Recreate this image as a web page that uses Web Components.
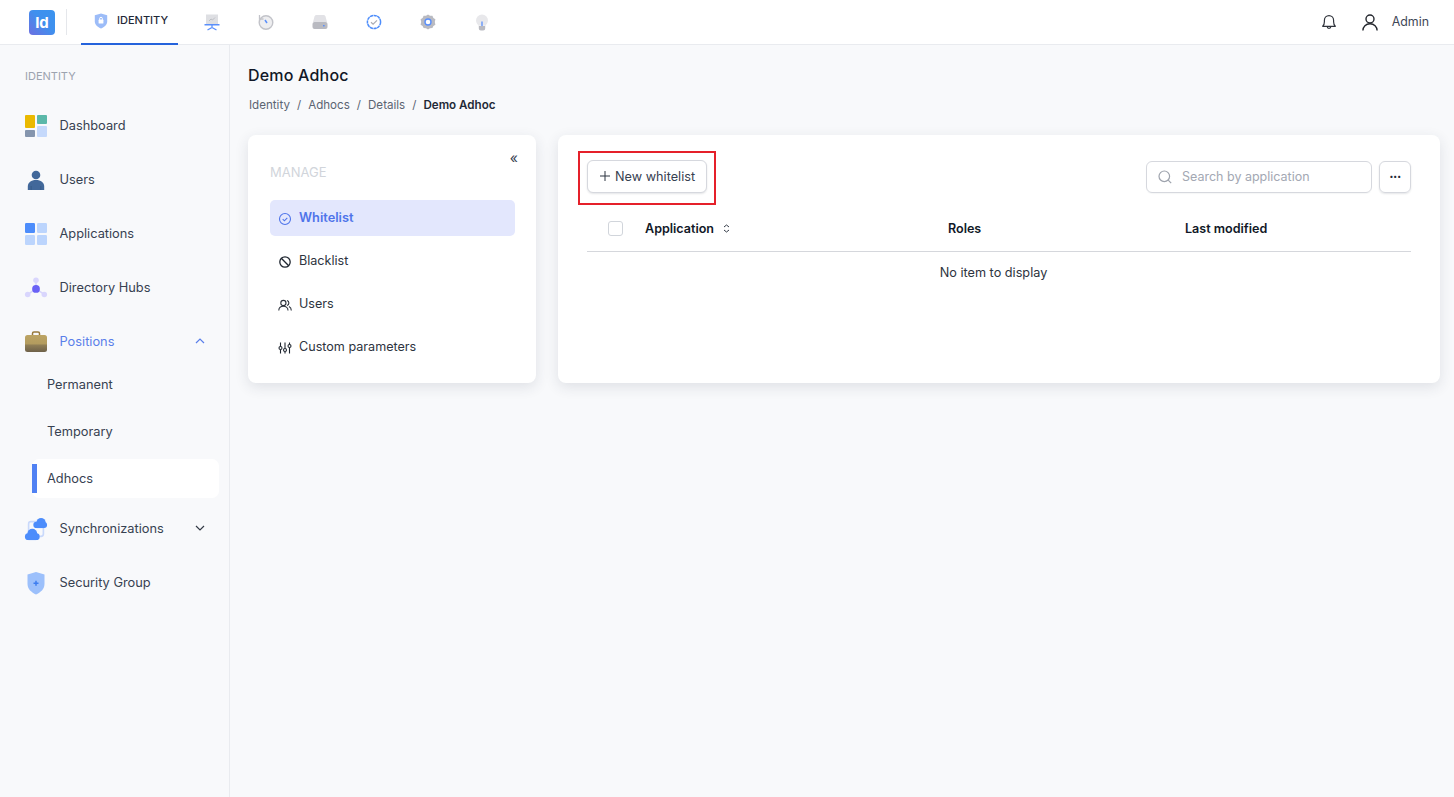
<!DOCTYPE html>
<html lang="en"><head><meta charset="utf-8"><title>Demo Adhoc</title>
<style>
html,body{margin:0;padding:0;height:100%;background:#f8f9fb;font-family:Inter,"Liberation Sans",sans-serif;color:#1f2937;overflow:hidden}
</style></head><body>
<x-app>
  <x-topbar slot="top"></x-topbar>
  <x-sidebar slot="side"></x-sidebar>
  <x-page slot="main"></x-page>
</x-app>
<script>
const I={
dash:`<svg width="24" height="24" viewBox="0 0 24 24"><rect x="1" y="1" width="10" height="13" rx="1" fill="#eab900"/><rect x="13" y="1" width="10" height="9" rx="1" fill="#5bb8a9"/><rect x="1" y="16" width="10" height="7" rx="1" fill="#8595ad"/><rect x="13" y="12" width="10" height="11" rx="1" fill="#c5d9fb"/></svg>`,
users:`<svg width="24" height="24" viewBox="0 0 24 24" fill="#42689a"><circle cx="12" cy="7" r="4.300"/><path d="M3.800 22v-3.500c0-4 3.400-6.500 8.200-6.500s8.200 2.500 8.200 6.500V22z"/><path d="M7.200 18v4M16.800 18v4" stroke="#33557f" stroke-width=".6"/></svg>`,
apps:`<svg width="24" height="24" viewBox="0 0 24 24"><rect x="1" y="1" width="10" height="10" rx="1.200" fill="#4d8dfb"/><rect x="13" y="1" width="10" height="10" rx="1.200" fill="#bcd5fd"/><rect x="1" y="13" width="10" height="10" rx="1.200" fill="#bcd5fd"/><rect x="13" y="13" width="10" height="10" rx="1.200" fill="#bcd5fd"/></svg>`,
hub:`<svg width="26" height="26" viewBox="0 0 26 26"><path d="M13 5v9M13 14l-9 6M13 14l9 6" stroke="#d7d5fb" stroke-width="1.600"/><circle cx="13" cy="4.500" r="3" fill="#d9d6fd"/><circle cx="4" cy="20" r="3" fill="#d9d6fd"/><circle cx="22" cy="20" r="3" fill="#d9d6fd"/><circle cx="13" cy="14" r="4.200" fill="#6a62f6"/></svg>`,
case:`<svg width="24" height="24" viewBox="0 0 24 24"><defs><linearGradient id="b" x1="0" y1="0" x2="0" y2="1"><stop offset="0" stop-color="#bca463"/><stop offset=".5" stop-color="#b39c5f"/><stop offset=".62" stop-color="#8d7c55"/><stop offset="1" stop-color="#6e6149"/></linearGradient></defs><path d="M8.500 5V3.500C8.500 2.500 9.200 2 10 2h4c.8 0 1.500.5 1.500 1.500V5" fill="none" stroke="#96793c" stroke-width="1.500"/><rect x="1" y="5" width="22" height="17" rx="2.500" fill="url(#b)"/></svg>`,
cloud:`<svg width="26" height="26" viewBox="0 0 26 26"><rect x="5" y="5" width="16" height="16" rx="2.500" fill="none" stroke="#c9d9fb" stroke-width="1.800"/><g fill="#4d8dfb"><circle cx="18.500" cy="6" r="5"/><circle cx="13.500" cy="8.600" r="3.400"/><circle cx="21.800" cy="8.600" r="3.200"/><rect x="13.500" y="6" width="8.300" height="6"/><circle cx="9" cy="18" r="5.300"/><circle cx="4.700" cy="21.300" r="3.700"/><circle cx="13.300" cy="21.300" r="3.700"/><rect x="4.700" y="18" width="8.600" height="7"/></g></svg>`,
shield:`<svg width="24" height="24" viewBox="0 0 24 24"><path d="M12 1l8.500 2.500V13c0 5-4 8.500-8.500 10.500C7.500 21.500 3.500 18 3.500 13V3.500z" fill="#9cc0fb"/><path d="M12 9.800v5M9.500 12.300h5" stroke="#3d7df0" stroke-width="1.500"/></svg>`,
lock:`<svg width="14" height="16" viewBox="0 0 14 16"><path d="M7 .4l6.200 1.800v6.300c0 3.300-2.900 5.600-6.200 7.100C3.700 14.100.8 11.800.8 8.500V2.200z" fill="#9cbcf8"/><rect x="4.600" y="6.600" width="4.800" height="3.900" rx=".6" fill="#fff"/><path d="M5.600 6.800V5.700a1.400 1.400 0 0 1 2.800 0v1.100" stroke="#fff" fill="none"/></svg>`,
board:`<svg width="16" height="17" viewBox="0 0 16 17"><rect x="2" y="0.500" width="12" height="9.500" fill="#dedfe3"/><path d="M5 7l2-2 1.500 1L11 3.500" stroke="#b5b6bd" stroke-width=".8" fill="none"/><rect x="0.500" y="10" width="15" height="1.500" fill="#5a8ffb"/><path d="M8 11v3M3.500 16l4.500-2.500L12.500 16" stroke="#5a8ffb" stroke-width="1.300" fill="none"/></svg>`,
hist:`<svg width="16" height="16" viewBox="0 0 16 16"><circle cx="8" cy="8.500" r="6.800" fill="#eeeef0" stroke="#c2c3c9" stroke-width="1.400"/><path d="M1.500 1v4h4" stroke="#c2c3c9" stroke-width="1.300" fill="none"/><path d="M7 6l2 3" stroke="#5a8ffb" stroke-width="1.500"/></svg>`,
disk:`<svg width="16" height="14" viewBox="0 0 16 14"><path d="M2.500 1.500C2.800.6 3.500 0 4.500 0h7c1 0 1.700.6 2 1.500L15 7H1z" fill="#e2e2e6"/><rect x=".5" y="7" width="15" height="7" rx="2" fill="#b9bac1"/><rect x="11" y="10" width="1.600" height="1.400" fill="#5a8ffb"/></svg>`,
check:`<svg width="16" height="16" viewBox="0 0 16 16"><circle cx="8" cy="8" r="6.600" fill="#fff" stroke="#4d8dfb" stroke-width="1.500" stroke-dasharray="3.300 .5"/><path d="M5 8.200l2.100 2L11 6.300" stroke="#a9abb3" stroke-width="1.200" fill="none"/></svg>`,
gear:`<svg width="16" height="16" viewBox="0 0 16 16"><path d="M8 .5l2 1.300 2.400-.1 1 2.200 2 1.300-.6 2.800.6 2.800-2 1.300-1 2-2.400.1-2 1.300-2-1.300-2.400-.1-1-2-2-1.300.6-2.800L.6 5.200l2-1.300 1-2.200 2.400.1z" fill="#b9bac1"/><circle cx="8" cy="8" r="3" fill="#fff" stroke="#5a8ffb" stroke-width="1.400"/></svg>`,
bulb:`<svg width="14" height="17" viewBox="0 0 14 17"><path d="M7 .5a6 6 0 0 1 6 6c0 2.400-1.600 3.600-2.400 5.300H3.400C2.600 10.100 1 8.900 1 6.500a6 6 0 0 1 6-6z" fill="#e8e8eb"/><path d="M3.800 12h6.400v2.500a2 2 0 0 1-2 2H5.800a2 2 0 0 1-2-2z" fill="#b9bac1"/><path d="M7 7.500V12" stroke="#5a8ffb" stroke-width="1.300"/></svg>`,
bell:`<svg width="16" height="16" viewBox="0 0 16 16" fill="none" stroke="#30343c" stroke-width="1.200"><path d="M1.700 12.300c1.300-1.200 1.700-2.300 1.700-4.500V6.200a4.600 4.600 0 0 1 9.200 0v1.600c0 2.200.4 3.300 1.700 4.500z" stroke-linejoin="round"/><path d="M6.200 12.600c0 2.400 3.600 2.400 3.600 0"/></svg>`,
user:`<svg width="16" height="17" viewBox="0 0 16 17" fill="none" stroke="#24272e" stroke-width="1.400"><circle cx="8" cy="5" r="4"/><path d="M.9 16.500c0-3.900 3-6.800 7.100-6.800s7.100 2.900 7.100 6.800"/></svg>`,
okc:`<svg width="14" height="14" viewBox="0 0 14 14" fill="none" stroke="#4f74ea" stroke-width="1.100"><circle cx="7" cy="7" r="5.500"/><path d="M4.700 7.200l1.700 1.600 2.900-3"/></svg>`,
ban:`<svg width="14" height="14" viewBox="0 0 14 14" fill="none" stroke="#1f2630" stroke-width="1.300"><circle cx="7" cy="7" r="5.200"/><path d="M3.300 3.300l7.400 7.400"/></svg>`,
ppl:`<svg width="14" height="14" viewBox="0 0 14 14" fill="none" stroke="#2a303a" stroke-width="1.100"><circle cx="5.400" cy="5" r="2.600"/><path d="M.8 12.500c0-2.600 2-4.300 4.600-4.300s4.600 1.700 4.600 4.300M9 2.500a2.600 2.600 0 0 1 0 5M11 8.600c1.400.6 2.300 2 2.300 3.900"/></svg>`,
tune:`<svg width="14" height="14" viewBox="0 0 14 14" fill="none" stroke="#1f2630" stroke-width="1.100"><path d="M2.500 1.500v3.500M2.500 9v3.500M7 1.500v6M7 10.800v1.700M11.500 1.500v2M11.500 7v5.500"/><circle cx="2.500" cy="7" r="1.500"/><circle cx="7" cy="9" r="1.500"/><circle cx="11.500" cy="5" r="1.500"/></svg>`,
search:`<svg width="16" height="16" viewBox="0 0 16 16" fill="none" stroke="#9ea3ad" stroke-width="1.200"><circle cx="7.300" cy="7.300" r="5.300"/><path d="M11.200 11.200l3 3"/></svg>`,
plus:`<svg width="10" height="10" viewBox="0 0 10 10" fill="none" stroke="#2d3440" stroke-width="1"><path d="M5 0v10M0 5h10"/></svg>`,
up:`<svg width="10" height="6" viewBox="0 0 10 6" fill="none" stroke="#5a7fea" stroke-width="1.200"><path d="M1 5l4-4 4 4"/></svg>`,
down:`<svg width="10" height="6" viewBox="0 0 10 6" fill="none" stroke="#333a46" stroke-width="1.200"><path d="M1 1l4 4 4-4"/></svg>`
};
function def(name,css,html){
  customElements.define(name,class extends HTMLElement{
    connectedCallback(){ if(this.shadowRoot) return;
      const r=this.attachShadow({mode:'open'});
      const a=n=>this.getAttribute(n)||'';
      r.innerHTML=`<style>${css}</style>`+(typeof html==='function'?html(a):html);
    }
  });
}
def('x-app',`:host{display:grid;grid-template-columns:230px 1fr;grid-template-rows:45px 1fr;height:797px}
 .t{grid-column:1/3}`,`<div class="t"><slot name="top"></slot></div><slot name="side"></slot><slot name="main"></slot>`);

def('x-topbar',`:host{display:flex;align-items:stretch;height:45px;box-sizing:border-box;background:#fff;border-bottom:1px solid #e9ebef;padding-left:29px;padding-right:25px}
 .logo{align-self:flex-start;margin-top:10px;width:26px;height:25px;border-radius:4px;background:linear-gradient(45deg,#6c6fe0,#3f90ee 55%,#3b93ee);color:#fff;font:700 15px/25px Inter,sans-serif;text-align:center}
 .sep{width:1px;height:26px;margin:9px 14px 0 11px;background:#e5e7eb}
 .tab{width:97px;box-sizing:border-box;height:45px;border-bottom:2px solid #2563dc;display:flex;gap:9px;padding-left:13px;align-items:center;font:500 11px/1 Inter,sans-serif;color:#1f2937;padding-bottom:3px}
 .tab svg{margin-top:2px}.tab span{margin-top:1px}
 .ics{display:flex;margin-left:7px}
 .ic{width:54px;height:44px;display:flex;align-items:center;justify-content:center}
 .r{margin-left:auto;display:flex;align-items:center;font:400 12.400px Inter,sans-serif;color:#3f4757}
 .r svg{display:block}.b{margin-right:25px}.u{margin-right:14px}.n{margin-top:-1px}
 `,`<div class="logo">Id</div><div class="sep"></div><div class="tab">${I.lock}<span>IDENTITY</span></div>
 <div class="ics">${['board','hist','disk','check','gear','bulb'].map(k=>`<div class="ic">${I[k]}</div>`).join('')}</div>
 <div class="r"><span class="b">${I.bell}</span><span class="u">${I.user}</span><span class="n">Admin</span></div>`);

def('x-nav',`:host{display:flex;align-items:center;height:54px;padding-left:24px;padding-right:24px;font:400 12.800px Inter,sans-serif;color:#374151}
 :host([active]){color:#5a7fea}
 .i{width:24px;height:26px;display:flex;align-items:center;justify-content:center;margin-right:11.500px;margin-top:2px}
 .a{margin-left:auto;display:flex}`,a=>`<span class="i">${I[a('icon')]}</span><span>${a('label')}</span>${a('arrow')?`<span class="a">${I[a('arrow')]}</span>`:''}`);

def('x-sub',`:host{display:flex;align-items:center;height:47px;padding-left:47px;font:400 12.800px Inter,sans-serif;color:#374151}`,a=>`<span>${a('label')}</span>`);
def('x-sub-active',`:host{display:flex;align-items:center;height:39px;margin:4px 10px 3px 32px;background:#fff;border-radius:7px;padding-left:15px;position:relative;font:400 12.800px Inter,sans-serif;color:#374151}
 .bar{position:absolute;left:0;top:5px;bottom:5px;width:5px;background:#5081f3}`,a=>`<i class="bar"></i><span>${a('label')}</span>`);

def('x-sidebar',`:host{display:block;box-sizing:border-box;border-right:1px solid #e9ebef;background:#f8f9fb;height:752px;padding-top:25px}
 .h{font:400 11px/13px Inter,sans-serif;color:#9ca3af;padding-left:25px;margin-bottom:15px}
 .s{margin-top:-7px}`,`<div class="h">IDENTITY</div>
 <x-nav icon="dash" label="Dashboard"></x-nav><x-nav icon="users" label="Users"></x-nav><x-nav icon="apps" label="Applications"></x-nav><x-nav icon="hub" label="Directory Hubs"></x-nav>
 <x-nav icon="case" label="Positions" arrow="up" active></x-nav>
 <div class="s"><x-sub label="Permanent"></x-sub><x-sub label="Temporary"></x-sub><x-sub-active label="Adhocs"></x-sub-active></div>
 <x-nav icon="cloud" label="Synchronizations" arrow="down"></x-nav><x-nav icon="shield" label="Security Group"></x-nav>`);

def('x-page',`:host{display:block;padding:20px 14px 0 18px;box-sizing:border-box}
 h1{margin:0;font:500 16px/20px Inter,sans-serif;letter-spacing:.2px;color:#111827}
 .bc{margin-top:11px;padding-left:1px;font:400 11.600px/18px Inter,sans-serif;color:#5b6472;display:flex;gap:7px}
 .bc b{font-weight:600;color:#1f2937}
 .row{display:flex;gap:22px;margin-top:21px;align-items:stretch;height:248px}`,
 `<h1>Demo Adhoc</h1><div class="bc"><span>Identity</span><span>/</span><span>Adhocs</span><span>/</span><span>Details</span><span>/</span><b>Demo Adhoc</b></div>
 <div class="row"><x-manage></x-manage><x-whitelist></x-whitelist></div>`);

def('x-mi',`:host{display:flex;align-items:center;height:36px;padding-left:8px;border-radius:5px;font:400 12.600px Inter,sans-serif;color:#2d3440;margin-bottom:7px}
 :host([active]){background:#e3e7fd;color:#4f74ea;font-weight:600;font-size:12.800px}
 .i{width:14px;height:14px;margin-right:7px;margin-top:2px;display:flex}.t{margin-top:-2px}`,a=>`<span class="i">${I[a('icon')]}</span><span class="t">${a('label')}</span>`);

def('x-manage',`:host{display:block;position:relative;width:288px;flex:none;box-sizing:border-box;background:#fff;border-radius:8px;box-shadow:0 4px 14px rgba(40,50,70,.12);padding:28px 21px 0 22px}
 .h{font:400 13px/18px Inter,sans-serif;color:#d1d5db;margin-bottom:19px}
 .c{position:absolute;right:18px;top:14px;font:400 14px/18px Inter,sans-serif;color:#374151}`,
 `<span class="c">«</span><div class="h">MANAGE</div>
 <x-mi icon="okc" label="Whitelist" active></x-mi><x-mi icon="ban" label="Blacklist"></x-mi><x-mi icon="ppl" label="Users"></x-mi><x-mi icon="tune" label="Custom parameters"></x-mi>`);

def('x-whitelist',`:host{display:block;position:relative;flex:1;background:#fff;border-radius:8px;box-shadow:0 4px 14px rgba(40,50,70,.12);padding:25px 29px 0;box-sizing:border-box;font-family:Inter,sans-serif}
 .bar{display:flex;align-items:center;height:33px}
 .btn{height:33px;box-sizing:border-box;width:120px;border:1px solid #d6d8de;border-radius:6px;background:#fff;box-shadow:0 1px 2px rgba(30,40,60,.12);display:flex;align-items:center;padding-left:12px;gap:5px;font:400 12.700px Inter,sans-serif;color:#374151}
 .btn span{margin-top:-1px}.btn svg{margin-top:-1px}
 .s{margin-left:auto;width:226px;height:32px;box-sizing:border-box;border:1px solid #d6d8de;border-radius:6px;display:flex;align-items:center;padding-left:10px;gap:9px;font:400 12.500px Inter,sans-serif;color:#a3a8b3;box-shadow:0 1px 1px rgba(30,40,60,.04)}
 .s span{margin-top:-1px}
 .m{margin-left:7px;width:32px;height:32px;box-sizing:border-box;border:1px solid #d6d8de;border-radius:6px;box-shadow:0 1px 2px rgba(30,40,60,.12);display:flex;align-items:center;justify-content:center;font:700 13px/1 Inter,sans-serif;color:#1f2937;letter-spacing:-.5px;padding-bottom:7px}
 .th{display:grid;grid-template-columns:58px 303px 237px 1fr;align-items:center;height:59px;padding-top:12px;border-bottom:1px solid #d5d7dc;box-sizing:border-box;font:600 12.550px Inter,sans-serif;color:#111827}
 .cb{width:15px;height:15px;box-sizing:border-box;border:1px solid #d1d5db;border-radius:3px;margin-left:21px}
 .app{display:flex;align-items:center;gap:9px}
 .e{text-align:center;font:400 12.700px/18px Inter,sans-serif;color:#2d3440;margin-top:12px;padding-right:11px}
 .red{position:absolute;left:20px;top:16px;width:138px;height:54px;box-sizing:border-box;border:2px solid #e5202a}`,
 `<div class="bar"><div class="btn">${I.plus}<span>New whitelist</span></div><div class="s">${I.search}<span>Search by application</span></div><div class="m">...</div></div>
 <div class="th"><div class="cb"></div><div class="app"><span>Application</span><svg width="7" height="9" viewBox="0 0 7 9" fill="none" stroke="#333a46" stroke-width="1"><path d="M1 3l2.500-2L6 3M1 6l2.500 2L6 6"/></svg></div><div>Roles</div><div>Last modified</div></div>
 <div class="e">No item to display</div><div class="red"></div>`);
</script>
</body></html>
